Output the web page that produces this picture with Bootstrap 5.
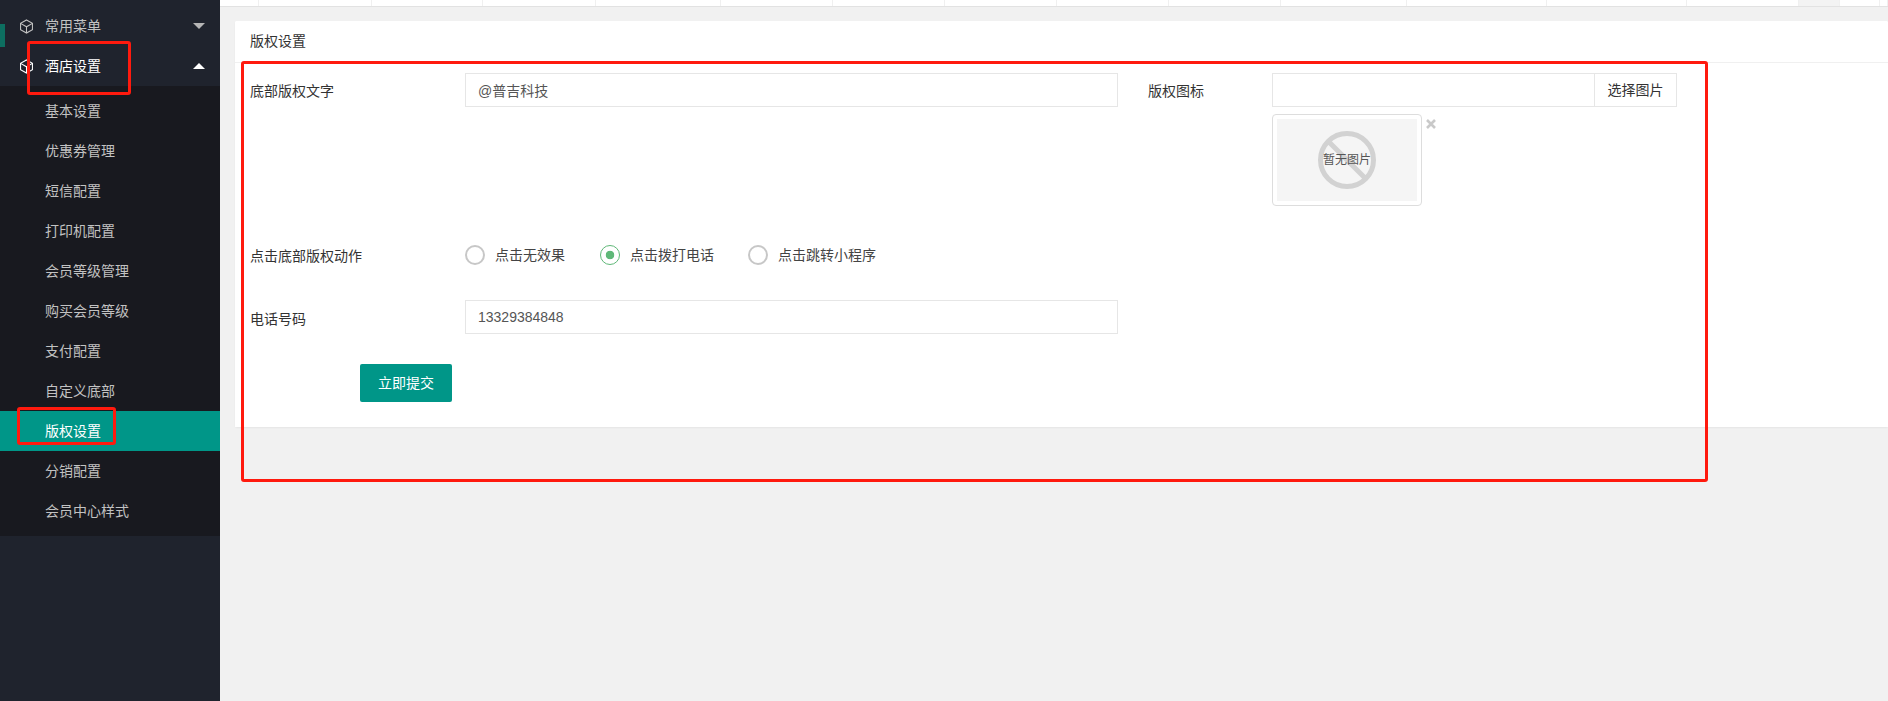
<!DOCTYPE html>
<html lang="zh-CN">
<head>
  <meta charset="UTF-8" />
  <meta name="viewport" content="width=device-width, initial-scale=1.0"/>
  <title>版权设置</title>
  <link href="https://cdn.jsdelivr.net/npm/bootstrap@5.3.0/dist/css/bootstrap.min.css" rel="stylesheet" />
  <style>
    html, body { height: 100%; overflow: hidden; }
    body {
      background: #f1f1f1;
      color: #333;
      font-family: "Liberation Sans", "Noto Sans CJK SC", sans-serif;
      font-size: 14px;
    }
    .page-wrap { position: relative; height: 701px; }

    /* sidebar */
    .side-bar { width: 220px; background: #1f232d; padding-top: 6px; flex-shrink: 0; }
    .side-head { height: 40px; padding-left: 19px; color: #c2c2c2; }
    .side-head.is-open { color: #fff; }
    .side-head svg { width: 15px; height: 15px; margin-right: 11px; }
    .side-arrow {
      margin-left: auto; margin-right: 15px; width: 0; height: 0;
      border-left: 6px solid transparent; border-right: 6px solid transparent;
    }
    .side-arrow.is-down { border-top: 6px solid #b5b5b5; }
    .side-arrow.is-up { border-bottom: 6px solid #fff; }
    .side-sub { background: #18191f; padding: 5px 0; }
    .side-sub a {
      display: block; height: 40px; line-height: 40px; padding-left: 45px;
      color: #c2c2c2; text-decoration: none;
    }
    .side-sub a.is-active { background: #009688; color: #fff; }
    .side-tick { position: absolute; left: 0; top: 24px; width: 5px; height: 23px; background: #0d6e60; }

    /* top strip */
    .top-strip {
      height: 7px; background: #fff; border-bottom: 1px solid #e2e2e2;
      display: grid;
      grid-template-columns: 39px 113px 111px 113px 125px 112px 112px 112px 112px 112px 126px 140px 140px 112px 41px 40px 8px;
    }
    .top-strip div { border-right: 1px solid #f0f0f0; }
    .top-strip div.is-current { background: #f3f3f3; }

    /* form card */
    .main-area { flex: 1; min-width: 0; }
    .set-card {
      margin: 14px 0 0 15px; border: 0; border-radius: 2px;
      box-shadow: 0 1px 2px rgba(0, 0, 0, .05);
    }
    .set-head {
      height: 42px; line-height: 41px; padding: 0 15px;
      background: #fff; border-bottom: 1px solid #f0f0f0; border-radius: 2px 2px 0 0;
    }
    .set-body { padding: 10px 15px 25px; }
    .set-label { width: 215px; flex-shrink: 0; line-height: 37px; }
    .set-label-short { width: 124px; margin-left: 30px; }
    .field-wide { width: 653px; }
    .field-pick { width: 405px; }
    .set-input {
      height: 34px; border: 1px solid #e6e6e6; border-radius: 0; padding: 0 12px;
      color: #555; font-size: 14px; box-shadow: none;
    }
    .pick-btn {
      width: 82px; height: 34px; border: 1px solid #e6e6e6; border-left: 0; border-radius: 0;
      background: #fff; color: #333; font-size: 14px; padding: 0;
    }
    .pre-box {
      width: 150px; height: 92px; margin-top: 7px; padding: 4px;
      border: 1px solid #ddd; border-radius: 4px; background: #fff;
    }
    .pre-inner { position: relative; height: 100%; background: #f5f5f5; }
    .pre-inner svg { width: 60px; height: 60px; }
    .pre-text { position: absolute; font-size: 12px; color: #555; }
    .pre-del { line-height: 0; margin: 12px 0 0 4px; }
    .pre-del svg { width: 10px; height: 10px; }
    .row-radio { margin-top: 30px; height: 40px; }
    .row-phone { margin-top: 24px; }
    .row-phone .set-label { line-height: 38px; }
    .radio-item { margin-right: 35px; }
    .radio-item:nth-child(3) { margin-right: 34px; }
    .radio-item .form-check-input {
      width: 20px; height: 20px; margin: 0 10px 0 0; border: 2px solid #c7c7c7;
      background: #fff; box-shadow: none;
    }
    .radio-item .form-check-input:checked {
      border: 1px solid #5fb878;
      background: radial-gradient(circle, #5fb878 0 4px, #fff 4.6px);
    }
    .radio-item label { color: #444; }
    .save-btn {
      width: 92px; height: 38px; margin: 26px 0 0 110px; padding: 0;
      background: #009688; border: 0; border-radius: 2px; color: #fff; font-size: 14px;
    }

    /* red annotation boxes drawn over the screenshot */
    .mark-box { position: absolute; border: 3px solid #ff1a0e; border-radius: 3px; pointer-events: none; }
    .mark-one { left: 27px; top: 41px; width: 104px; height: 54px; }
    .mark-two { left: 17px; top: 407px; width: 99px; height: 38px; }
    .mark-three { left: 241px; top: 61px; width: 1467px; height: 421px; }
  </style>
</head>
<body>
  <div class="page-wrap d-flex">
    <!-- Sidebar -->
    <div class="side-bar">
      <div class="side-head d-flex align-items-center">
        <svg viewBox="0 0 24 24" fill="none" stroke="currentColor" stroke-width="1.7"><path d="M12 1.5 21.5 7v10L12 22.5 2.5 17V7z"/><path d="M2.5 7 12 12.5 21.5 7M12 12.5v10"/></svg>
        <span>常用菜单</span>
        <span class="side-arrow is-down"></span>
      </div>
      <div class="side-head is-open d-flex align-items-center">
        <svg viewBox="0 0 24 24" fill="none" stroke="currentColor" stroke-width="1.7"><path d="M12 1.5 21.5 7v10L12 22.5 2.5 17V7z"/><path d="M2.5 7 12 12.5 21.5 7M12 12.5v10"/></svg>
        <span>酒店设置</span>
        <span class="side-arrow is-up"></span>
      </div>
      <div class="side-sub">
        <a href="#">基本设置</a>
        <a href="#">优惠券管理</a>
        <a href="#">短信配置</a>
        <a href="#">打印机配置</a>
        <a href="#">会员等级管理</a>
        <a href="#">购买会员等级</a>
        <a href="#">支付配置</a>
        <a href="#">自定义底部</a>
        <a href="#" class="is-active">版权设置</a>
        <a href="#">分销配置</a>
        <a href="#">会员中心样式</a>
      </div>
    </div>
    <div class="side-tick"></div>

    <!-- Main -->
    <div class="main-area">
      <div class="top-strip">
        <div></div><div></div><div></div><div></div><div></div><div></div><div></div><div></div>
        <div></div><div></div><div></div><div></div><div></div><div></div><div class="is-current"></div><div></div><div></div>
      </div>

      <div class="card set-card">
        <div class="set-head">版权设置</div>
        <form class="set-body bg-white">
          <div class="d-flex align-items-start">
            <div class="set-label">底部版权文字</div>
            <input type="text" class="form-control set-input field-wide" value="@普吉科技" />
            <div class="set-label set-label-short">版权图标</div>
            <div class="field-pick">
              <div class="d-flex">
                <input type="text" class="form-control set-input flex-grow-1" />
                <button type="button" class="btn pick-btn flex-shrink-0">选择图片</button>
              </div>
              <div class="d-flex align-items-start">
                <div class="pre-box">
                  <div class="pre-inner d-flex align-items-center justify-content-center">
                    <svg viewBox="0 0 60 60" fill="none" stroke="#d2d2d2" stroke-width="5"><circle cx="30" cy="30" r="26.5"/><path d="M11.5 11.5 48.5 48.5"/></svg>
                    <span class="pre-text">暂无图片</span>
                  </div>
                </div>
                <span class="pre-del">
                  <svg viewBox="0 0 10 10" stroke="#c9c9c9" stroke-width="2.6"><path d="M1 1 9 9M9 1 1 9"/></svg>
                </span>
              </div>
            </div>
          </div>

          <div class="row-radio d-flex align-items-center">
            <div class="set-label">点击底部版权动作</div>
            <div class="radio-item form-check d-flex align-items-center p-0">
              <input class="form-check-input" type="radio" name="action" id="actNone" />
              <label for="actNone">点击无效果</label>
            </div>
            <div class="radio-item form-check d-flex align-items-center p-0">
              <input class="form-check-input" type="radio" name="action" id="actTel" checked />
              <label for="actTel">点击拨打电话</label>
            </div>
            <div class="radio-item form-check d-flex align-items-center p-0">
              <input class="form-check-input" type="radio" name="action" id="actApp" />
              <label for="actApp">点击跳转小程序</label>
            </div>
          </div>

          <div class="row-phone d-flex align-items-start">
            <div class="set-label">电话号码</div>
            <input type="text" class="form-control set-input field-wide" value="13329384848" />
          </div>

          <button type="button" class="btn save-btn">立即提交</button>
        </form>
      </div>
    </div>

    <div class="mark-box mark-one"></div>
    <div class="mark-box mark-two"></div>
    <div class="mark-box mark-three"></div>
  </div>

  <script src="https://cdn.jsdelivr.net/npm/bootstrap@5.3.0/dist/js/bootstrap.bundle.min.js"></script>
</body>
</html>
